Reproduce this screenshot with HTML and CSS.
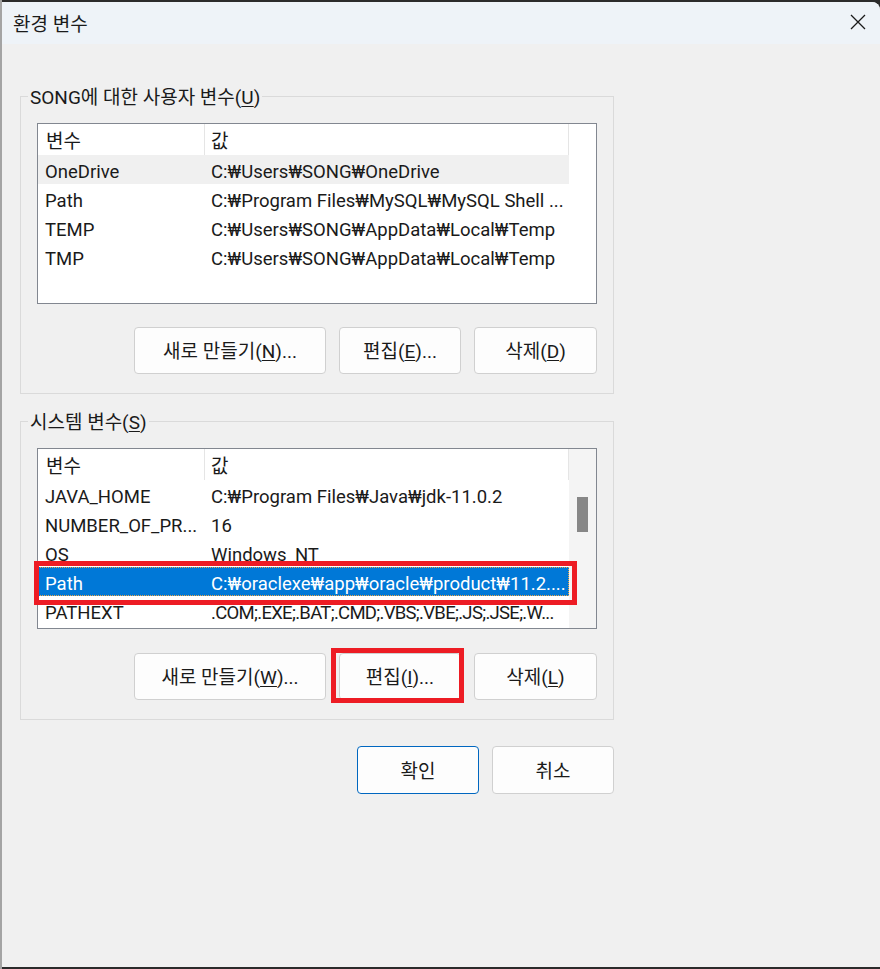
FILE: index.html
```html
<!DOCTYPE html>
<html lang="ko">
<head>
<meta charset="utf-8">
<title>환경 변수</title>
<link rel="stylesheet" href="styles.css">
</head>
<body>
<div class="frame">
  <div class="window">
    <div class="titlebar">
      <span class="title">환경 변수</span>
      <svg class="close" width="16" height="16" viewBox="0 0 16 16"><path d="M1 1 L15 15 M15 1 L1 15" stroke="#1a1a1a" stroke-width="1.3" fill="none"/></svg>
    </div>
    <div class="content">
      <fieldset class="group g1">
        <legend>SONG에 대한 사용자 변수(<u>U</u>)</legend>
        <div class="list">
          <div class="cols">
            <div class="row head"><span class="c1 hd">변수</span><span class="c2 hd">값</span></div>
            <div class="row hover"><span class="c1">OneDrive</span><span class="c2">C:₩Users₩SONG₩OneDrive</span></div>
            <div class="row"><span class="c1">Path</span><span class="c2">C:₩Program Files₩MySQL₩MySQL Shell ...</span></div>
            <div class="row"><span class="c1">TEMP</span><span class="c2">C:₩Users₩SONG₩AppData₩Local₩Temp</span></div>
            <div class="row"><span class="c1">TMP</span><span class="c2">C:₩Users₩SONG₩AppData₩Local₩Temp</span></div>
          </div>
          <div class="vside plain"></div>
        </div>
        <div class="btnrow r1">
          <button class="btn wide">새로 만들기(<u>N</u>)...</button>
          <button class="btn">편집(<u>E</u>)...</button>
          <button class="btn del">삭제(<u>D</u>)</button>
        </div>
      </fieldset>

      <fieldset class="group g2">
        <legend>시스템 변수(<u>S</u>)</legend>
        <div class="list">
          <div class="cols">
            <div class="row head"><span class="c1 hd">변수</span><span class="c2 hd">값</span></div>
            <div class="row"><span class="c1">JAVA_HOME</span><span class="c2">C:₩Program Files₩Java₩jdk-11.0.2</span></div>
            <div class="row"><span class="c1">NUMBER_OF_PR...</span><span class="c2">16</span></div>
            <div class="row"><span class="c1">OS</span><span class="c2">Windows_NT</span></div>
            <div class="row sel"><span class="c1">Path</span><span class="c2">C:₩oraclexe₩app₩oracle₩product₩11.2....</span></div>
            <div class="row"><span class="c1">PATHEXT</span><span class="c2 tight">.COM;.EXE;.BAT;.CMD;.VBS;.VBE;.JS;.JSE;.W...</span></div>
          </div>
          <div class="vside scroll"><div class="thumb"></div></div>
        </div>
        <div class="btnrow r2">
          <button class="btn wide">새로 만들기(<u>W</u>)...</button>
          <button class="btn">편집(<u>I</u>)...</button>
          <button class="btn del">삭제(<u>L</u>)</button>
        </div>
      </fieldset>

      <div class="dlgbtns">
        <button class="btn ok">확인</button>
        <button class="btn">취소</button>
      </div>
    </div>
    <div class="mark mark1"></div>
    <div class="mark mark2"></div>
  </div>
</div>
</body>
</html>
```

FILE: styles.css
```css
html, body {
  margin: 0;
  padding: 0;
}
body {
  font-family: Roboto, "Noto Sans CJK KR", sans-serif;
  font-size: 19px;
  color: #1a1a1a;
  background: #2b2b2b;
}
.frame {
  width: 880px;
  height: 969px;
  background: linear-gradient(to right, #a4a4a4 2px, #2b2b2b 2px);
  padding-top: 2px;
  box-sizing: border-box;
  overflow: hidden;
}
.window {
  position: relative;
  margin-left: 2px;
  width: 878px;
  height: 965px;
  background: #f0f0f0;
  border-top-right-radius: 8px;
  display: flex;
  flex-direction: column;
}
.titlebar {
  height: 42px;
  background: #eef3f8;
  border-top-right-radius: 8px;
  display: flex;
  align-items: center;
  justify-content: space-between;
  padding: 0 14px 0 11px;
  flex: none;
}
.title {
  font-size: 19px;
  line-height: 20px;
  color: #1b1b1b;
  margin-top: 3px;
}
.close {
  display: block;
  margin-top: -2px;
}
.content {
  display: flex;
  flex-direction: column;
}
.group {
  box-sizing: border-box;
  width: 594px;
  margin: 0 0 0 18px;
  padding: 15px 16px 19px 16px;
  border: 1px solid #dadada;
  min-inline-size: 0;
}
.g1 { margin-top: 40px; }
.g2 { margin-top: 15px; }
.group legend {
  font-size: 19px;
  line-height: 20px;
  padding: 4px 2px 0 2px;
  margin-left: -9px;
  color: #1a1a1a;
}
u {
  text-decoration: underline;
  text-underline-offset: 2px;
  text-decoration-thickness: 1px;
}
.list {
  box-sizing: border-box;
  width: 560px;
  height: 181px;
  border: 1px solid #828790;
  background: #fff;
  display: flex;
  overflow: hidden;
}
.cols {
  width: 531px;
  flex: none;
}
.row {
  box-sizing: border-box;
  display: flex;
  height: 29px;
  line-height: 23px;
  padding-top: 6px;
  white-space: nowrap;
  font-size: 18.5px;
}
.row.head {
  height: 31px;
  padding-top: 0;
  font-size: 19px;
}
.c1 {
  box-sizing: border-box;
  width: 167px;
  padding-left: 7px;
  overflow: hidden;
  flex: none;
}
.c2 {
  box-sizing: border-box;
  width: 364px;
  padding-left: 6px;
  overflow: hidden;
  flex: none;
}
.c2.tight {
  letter-spacing: -0.7px;
}
.hd {
  height: 31px;
  line-height: 36px;
  border-right: 1px solid #e5e5e5;
}
.c1.hd { padding-left: 8px; }
.row.hover { background: #f0f0f0; }
.row.sel {
  background: #0078d7;
  color: #fff;
  outline: 1px dotted #e9a64a;
  outline-offset: -1px;
}
.vside {
  flex: 1;
}
.vside.scroll {
  background: #f4f4f4;
}
.thumb {
  width: 11px;
  height: 35px;
  background: #878787;
  margin: 48px 0 0 8px;
}
.btnrow {
  display: flex;
  justify-content: flex-end;
  gap: 13px;
}
.r1 { margin-top: 23px; }
.r2 { margin-top: 24px; }
.btn {
  box-sizing: border-box;
  height: 47px;
  width: 122px;
  border: 1px solid #d0d0d0;
  border-radius: 4px;
  background: #fdfdfd;
  font-family: Roboto, "Noto Sans CJK KR", sans-serif;
  font-size: 19px;
  color: #1a1a1a;
  padding: 0 0 2px 0;
}
.btn.wide { width: 192px; }
.btn.del { width: 123px; }
.dlgbtns {
  display: flex;
  justify-content: flex-end;
  gap: 13px;
  width: 594px;
  margin: 26px 0 0 18px;
}
.dlgbtns .btn {
  height: 48px;
  width: 122px;
}
.btn.ok {
  border-color: #0067c0;
}
.mark {
  position: absolute;
  box-sizing: border-box;
  border: 5px solid #ed1c24;
}
.mark1 {
  left: 32px;
  top: 559px;
  width: 543px;
  height: 44px;
}
.mark2 {
  left: 329px;
  top: 646px;
  width: 133px;
  height: 55px;
}
```
